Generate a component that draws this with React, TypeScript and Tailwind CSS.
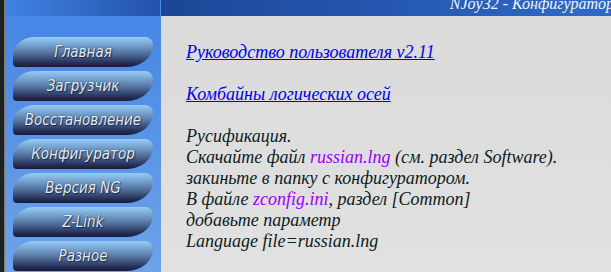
import React from "react";

const items = ["Главная", "Загрузчик", "Восстановление", "Конфигуратор", "Версия NG", "Z-Link", "Разное"];

function NavButton({ label }: { label: string }) {
  return (
    <a
      href="#"
      className="flex h-[30px] w-[140px] items-center justify-center rounded-[22px_8px_26px_4px/18px_8px_22px_4px] bg-[linear-gradient(to_bottom,#96cdf7_0%,#74a0cc_28%,#4e6b96_58%,#27345e_84%,#181a3a_100%)] text-[15px] italic text-[#e4eefa] [font-stretch:condensed] [font-family:'DejaVu_Sans',sans-serif] [text-shadow:0_0_1px_rgba(10,15,40,0.9),1px_1px_1px_rgba(10,15,40,0.6)]"
    >
      {label}
    </a>
  );
}

export default function App() {
  return (
    <div className="flex h-[272px] w-[611px] overflow-hidden">
      <div className="w-[4px] shrink-0 bg-[#1b2226]" />
      <div className="w-[1px] shrink-0 bg-[#85785e]" />
      <div className="flex w-[156px] shrink-0 flex-col bg-[linear-gradient(to_bottom,#4384e4,#6ea3ea)]">
        <div className="h-[16px] shrink-0 border-r border-[#4a8ae8] bg-[linear-gradient(to_right,#4083e4,#2252aa)]" />
        <div className="flex flex-col gap-[4px] pl-[8px] pt-[21px]">
          {items.map((l) => (
            <NavButton key={l} label={l} />
          ))}
        </div>
      </div>
      <div className="flex min-w-0 flex-1 flex-col bg-[linear-gradient(to_bottom,#dadada,#e1e1e1)]">
        <div className="flex h-[16px] shrink-0 justify-end overflow-hidden bg-[linear-gradient(to_right,#1b4696,#2f69c9)]">
          <span className="mr-[-3px] mt-[-7px] whitespace-nowrap text-[16px] italic leading-[21px] text-[#f2f4fa] [font-family:'Liberation_Serif',serif]">
            NJoy32 - Конфигуратор
          </span>
        </div>
        <div className="pl-[25px] pt-[26px] text-[18px] italic leading-[21px] text-[#0d1c1c] [font-family:'Liberation_Serif',serif]">
          <a href="#" className="text-[#0000ee] underline">Руководство пользователя v2.11</a>
          <br />
          <br />
          <a href="#" className="text-[#0000ee] underline">Комбайны логических осей</a>
          <br />
          <br />
          Русификация.
          <br />
          Скачайте файл <span className="text-[#9a00f5]">russian.lng</span> (см. раздел Software).
          <br />
          закиньте в папку с конфигуратором.
          <br />
          В файле <span className="text-[#9a00f5]">zconfig.ini</span>, раздел [Common]
          <br />
          добавьте параметр
          <br />
          Language file=russian.lng
        </div>
      </div>
    </div>
  );
}
